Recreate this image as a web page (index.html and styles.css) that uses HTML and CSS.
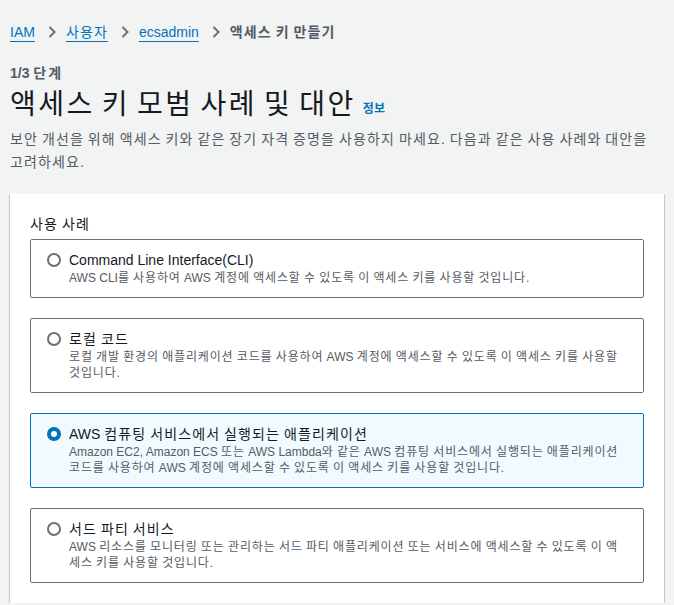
FILE: index.html
```html
<!DOCTYPE html>
<html lang="ko">
<head>
    <meta charset="UTF-8">
    <meta name="viewport" content="width=device-width, initial-scale=1.0">
    <title>액세스 키 만들기</title>
    <link rel="stylesheet" href="styles.css">
</head>
<body>

    <main class="page">
        <!-- Breadcrumbs -->
        <nav class="crumbs">
            <a href="#">IAM</a>
            <span class="sep"><svg width="8" height="12" viewBox="0 0 8 12"><path d="M1.5 1l5 5-5 5" fill="none" stroke="#687078" stroke-width="2"/></svg></span>
            <a class="ko" href="#">사용자</a>
            <span class="sep"><svg width="8" height="12" viewBox="0 0 8 12"><path d="M1.5 1l5 5-5 5" fill="none" stroke="#687078" stroke-width="2"/></svg></span>
            <a href="#">ecsadmin</a>
            <span class="sep"><svg width="8" height="12" viewBox="0 0 8 12"><path d="M1.5 1l5 5-5 5" fill="none" stroke="#687078" stroke-width="2"/></svg></span>
            <span class="current ko">액세스 키 만들기</span>
        </nav>

        <!-- Header -->
        <div class="step">1/3 <span class="step-ko">단계</span></div>
        <h1 class="heading ko">액세스 키 모범 사례 및 대안 <a class="info" href="#">정보</a></h1>
        <p class="desc ko">보안 개선을 위해 액세스 키와 같은 장기 자격 증명을 사용하지 마세요. 다음과 같은 사용 사례와 대안을 고려하세요.</p>

        <!-- Use case options -->
        <section class="panel">
            <div class="label ko">사용 사례</div>
            <div class="options">
                <label class="tile">
                    <span class="radio"></span>
                    <span class="tile-text">
                        <span class="tile-title">Command Line Interface(CLI)</span>
                        <span class="tile-desc ko"><span class="en">AWS CLI</span>를 사용하여 <span class="en">AWS</span> 계정에 액세스할 수 있도록 이 액세스 키를 사용할 것입니다.</span>
                    </span>
                </label>
                <label class="tile">
                    <span class="radio"></span>
                    <span class="tile-text">
                        <span class="tile-title ko">로컬 코드</span>
                        <span class="tile-desc ko">로컬 개발 환경의 애플리케이션 코드를 사용하여 <span class="en">AWS</span> 계정에 액세스할 수 있도록 이 액세스 키를 사용할 것입니다.</span>
                    </span>
                </label>
                <label class="tile selected">
                    <span class="radio"></span>
                    <span class="tile-text">
                        <span class="tile-title ko"><span class="en">AWS</span> 컴퓨팅 서비스에서 실행되는 애플리케이션</span>
                        <span class="tile-desc ko"><span class="en">Amazon EC2, Amazon ECS</span> 또는 <span class="en">AWS Lambda</span>와 같은 <span class="en">AWS</span> 컴퓨팅 서비스에서 실행되는 애플리케이션 코드를 사용하여 <span class="en">AWS</span> 계정에 액세스할 수 있도록 이 액세스 키를 사용할 것입니다.</span>
                    </span>
                </label>
                <label class="tile">
                    <span class="radio"></span>
                    <span class="tile-text">
                        <span class="tile-title ko">서드 파티 서비스</span>
                        <span class="tile-desc ko"><span class="en">AWS</span> 리소스를 모니터링 또는 관리하는 서드 파티 애플리케이션 또는 서비스에 액세스할 수 있도록 이 액세스 키를 사용할 것입니다.</span>
                    </span>
                </label>
            </div>
        </section>
    </main>

</body>
</html>
```

FILE: styles.css
```css
/* base */
*{
    margin: 0;
    padding: 0;
    box-sizing: border-box;
}

body{
    background: #f2f3f3;
    color: #16191f;
    font-family: "Liberation Sans", "Noto Sans CJK KR", sans-serif;
    font-size: 14px;
}

.ko{
    letter-spacing: 0.08em;
    word-spacing: -0.08em;
}
.en{
    letter-spacing: 0;
    word-spacing: 0;
}

.page{
    padding: 21px 10px 0 10px;
}

/* Breadcrumbs */
.crumbs{
    display: flex;
    align-items: center;
    line-height: 22px;
    font-size: 14px;
}
.crumbs a{
    color: #0073bb;
    text-decoration: underline;
    text-underline-offset: 4px;
    text-decoration-thickness: 1px;
}
.crumbs .sep{
    display: flex;
    margin: 0 10px 0 13px;
}
.crumbs .current{
    color: #545b64;
    font-weight: 700;
}

/* Header */
.step{
    margin-top: 22px;
    font-size: 14px;
    line-height: 17px;
    font-weight: 700;
    color: #545b64;
}
.step-ko{
    letter-spacing: 0.14em;
}

.heading{
    margin-top: 5px;
    font-size: 28px;
    line-height: 36px;
    font-weight: 400;
    color: #16191f;
    letter-spacing: 0.09em;
    word-spacing: -0.12em;
}
.info{
    font-size: 12px;
    font-weight: 700;
    color: #0073bb;
    text-decoration: none;
    letter-spacing: 0.02em;
    vertical-align: 1px;
}

.desc{
    margin-top: 1px;
    font-size: 14px;
    line-height: 23px;
    color: #545b64;
}

/* Container */
.panel{
    margin-top: 20px;
    background: #fff;
    padding: 20px;
    box-shadow: 0 1px 1px 0 rgba(0, 28, 36, 0.3), 1px 1px 1px 0 rgba(0, 28, 36, 0.15), -1px 1px 1px 0 rgba(0, 28, 36, 0.15);
}

.label{
    line-height: 20px;
    font-size: 14px;
    color: #16191f;
}

.options{
    display: flex;
    flex-direction: column;
    gap: 20px;
    margin-top: 5px;
}

/* Radio tiles */
.tile{
    display: flex;
    gap: 8px;
    align-items: flex-start;
    padding: 10px 16px 10px 16px;
    border: 1px solid #687078;
    border-radius: 2px;
    cursor: pointer;
}
.tile.selected{
    background: #f1faff;
    border-color: #0073bb;
}

.radio{
    flex: none;
    width: 14px;
    height: 14px;
    margin-top: 3px;
    border: 2px solid #687078;
    border-radius: 50%;
    background: #fff;
}
.tile.selected .radio{
    border: 4px solid #0073bb;
}

.tile-text{
    display: flex;
    flex-direction: column;
}
.tile-title{
    line-height: 20px;
    font-size: 14px;
    color: #16191f;
}
.tile-desc{
    line-height: 16.5px;
    font-size: 12px;
    color: #545b64;
}
.tile-desc.ko{
    letter-spacing: 0.07em;
    word-spacing: -0.07em;
}
```
